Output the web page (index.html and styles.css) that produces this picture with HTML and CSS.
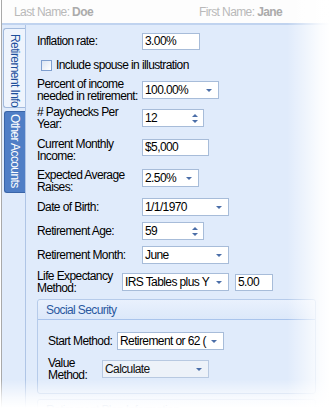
FILE: index.html
```html
<!DOCTYPE html>
<html>
<head>
    <title>Retirement Info</title>
    <link rel="stylesheet" href="styles.css">
</head>
<body>
    <div class="window">
        <div class="header">
            <div class="name name-last">Last Name: <b>Doe</b></div>
            <div class="name">First Name: <b>Jane</b></div>
        </div>
        <div class="main">
            <div class="tabs">
                <div class="tab tab-active">Retirement Info</div>
                <div class="tab tab-other">Other Accounts</div>
            </div>
            <div class="content">
                <div class="row mt6">
                    <div class="label">Inflation rate:</div>
                    <div class="field text w58"><span>3.00%</span></div>
                </div>
                <div class="row check-row mt8">
                    <span class="checkbox"></span>
                    <span>Include spouse in illustration</span>
                </div>
                <div class="row two mt7">
                    <div class="label">Percent of income<br>needed in retirement:</div>
                    <div class="field combo w77"><span>100.00%</span><i class="arrow"></i></div>
                </div>
                <div class="row two mt4">
                    <div class="label"># Paychecks Per<br>Year:</div>
                    <div class="field spin w62"><span>12</span><i class="spin-btns"><i class="up"></i><i class="down"></i></i></div>
                </div>
                <div class="row two mt5">
                    <div class="label low">Current Monthly<br>Income:</div>
                    <div class="field text w67"><span>$5,000</span></div>
                </div>
                <div class="row two mt7">
                    <div class="label low">Expected Average<br>Raises:</div>
                    <div class="field combo w57"><span>2.50%</span><i class="arrow"></i></div>
                </div>
                <div class="row mt7">
                    <div class="label">Date of Birth:</div>
                    <div class="field combo w87"><span>1/1/1970</span><i class="arrow"></i></div>
                </div>
                <div class="row mt4">
                    <div class="label">Retirement Age:</div>
                    <div class="field spin w62"><span>59</span><i class="spin-btns"><i class="up"></i><i class="down"></i></i></div>
                </div>
                <div class="row mt4">
                    <div class="label">Retirement Month:</div>
                    <div class="field combo w87"><span>June</span><i class="arrow"></i></div>
                </div>
                <div class="row two mt5">
                    <div class="label narrow">Life Expectancy<br>Method:</div>
                    <div class="field combo w107"><span>IRS Tables plus Y</span><i class="arrow"></i></div>
                    <div class="field text w38 ml6"><span>5.00</span></div>
                </div>

                <div class="group">
                    <div class="group-head">Social Security</div>
                    <div class="group-body">
                        <div class="row mt11">
                            <div class="label l-start">Start Method:</div>
                            <div class="field combo w107"><span>Retirement or 62 (</span><i class="arrow"></i></div>
                        </div>
                        <div class="row two mt6">
                            <div class="label l-value">Value<br>Method:</div>
                            <div class="field combo disabled w107"><span>Calculate</span><i class="arrow"></i></div>
                        </div>
                    </div>
                </div>

                <div class="group">
                    <div class="group-head">Retirement Plan Information</div>
                    <div class="group-body tall"></div>
                </div>
            </div>
        </div>
    </div>
</body>
</html>
```

FILE: styles.css
```css
body {
    margin: 0;
    width: 330px;
    height: 408px;
    overflow: hidden;
    position: relative;
    background: #fff;
    color: #000;
    font-family: "Liberation Sans", Arial, sans-serif;
    font-size: 12px;
    letter-spacing: -0.6px;
}
/* white fade over the right and bottom edges */
body::after {
    content: "";
    position: absolute;
    left: 0;
    top: 0;
    right: 0;
    bottom: 0;
    pointer-events: none;
    background:
        linear-gradient(to right, rgba(255, 255, 255, 0) 87%, rgba(255, 255, 255, 0.85) 97%, #fff),
        linear-gradient(to bottom, rgba(255, 255, 255, 0) 93%, rgba(255, 255, 255, 0.75) 97.5%, #fff);
}
.window {
    margin-left: 1px;
    border-left: 1px solid #a9a9a9;
    height: 408px;
    display: flex;
    flex-direction: column;
}
.header {
    height: 23px;
    flex: none;
    display: flex;
    align-items: center;
    padding-left: 12px;
    border-bottom: 2px solid #c0d3ef;
    background: #fdfdfd;
    color: #b9b9b9;
}
.name-last {
    width: 185px;
}
.name b {
    color: #ababab;
}
.main {
    flex: 1;
    display: flex;
    overflow: hidden;
    background: #e0ebfb;
}
.tabs {
    width: 23px;
    flex: none;
    border-right: 1px solid #afc5e6;
    padding-top: 3px;
}
.tab {
    writing-mode: vertical-rl;
    white-space: nowrap;
    box-sizing: border-box;
    border-radius: 3px 0 0 3px;
}
.tab-active {
    margin-left: 1px;
    width: 22px;
    height: 80px;
    line-height: 21px;
    padding-top: 5px;
    background: #eef4fd;
    border: 1px solid #a3badc;
    border-right: none;
    color: #1d4f9c;
}
.tab-other {
    margin-left: 2px;
    margin-top: 3px;
    width: 21px;
    height: 82px;
    line-height: 20px;
    padding-top: 2px;
    background: #4f7ec6;
    border: 1px solid #3a65a8;
    border-right: none;
    color: #fff;
}
.content {
    flex: 1;
    padding-left: 11px;
}
.row {
    display: flex;
    align-items: center;
    height: 20px;
}
.row.two {
    height: 24px;
}
.check-row {
    height: 12px;
    padding-left: 4px;
}
.mt4 { margin-top: 4px; }
.mt5 { margin-top: 5px; }
.mt6 { margin-top: 6px; }
.mt7 { margin-top: 7px; }
.mt8 { margin-top: 8px; }
.mt11 { margin-top: 11px; }
.label {
    width: 105px;
    flex: none;
    line-height: 12.5px;
    white-space: nowrap;
}
.label.low {
    padding-top: 6px;
}
.label.narrow {
    width: 85px;
}
.label.l-start {
    width: 69px;
}
.label.l-value {
    width: 54px;
}
.checkbox {
    width: 11px;
    height: 11px;
    box-sizing: border-box;
    border: 1px solid #7f9fcf;
    background: linear-gradient(135deg, #dbe5f3, #fff);
    margin-right: 4px;
}
.field {
    box-sizing: border-box;
    height: 18px;
    display: flex;
    align-items: center;
    padding-left: 2px;
    border: 1px solid #a7bcd9;
    background: #fff;
    white-space: nowrap;
    overflow: hidden;
}
.field.text {
    height: 17px;
}
.field.disabled {
    background: #edf2f9;
    border-color: #b8c9e1;
    color: #111;
}
.w38 { width: 38px; }
.w57 { width: 57px; }
.w58 { width: 58px; }
.w62 { width: 62px; }
.w67 { width: 67px; }
.w77 { width: 77px; }
.w87 { width: 87px; }
.w107 { width: 107px; }
.ml6 { margin-left: 6px; }
.arrow {
    margin-left: auto;
    margin-right: 6px;
    flex: none;
    width: 0;
    height: 0;
    border-left: 3px solid transparent;
    border-right: 3px solid transparent;
    border-top: 3px solid #4b6ea8;
}
.spin-btns {
    margin-left: auto;
    margin-right: 5px;
    display: flex;
    flex-direction: column;
    gap: 3px;
}
.spin-btns .up,
.spin-btns .down {
    width: 0;
    height: 0;
    border-left: 3px solid transparent;
    border-right: 3px solid transparent;
}
.spin-btns .up {
    border-bottom: 3px solid #4b6ea8;
}
.spin-btns .down {
    border-top: 3px solid #4b6ea8;
}
.group {
    margin-top: 5px;
    width: 279px;
    box-sizing: border-box;
    border: 1px solid #b6cbea;
    border-radius: 3px;
}
.group-head {
    height: 19px;
    display: flex;
    align-items: center;
    padding-left: 8px;
    border-bottom: 1px solid #a9c4ec;
    border-radius: 3px 3px 0 0;
    background: linear-gradient(#e9f1fd, #dce8fa);
    color: #2a58a0;
}
.group-body {
    padding: 0 0 12px 10px;
}
.group-body.tall {
    height: 80px;
}
```
